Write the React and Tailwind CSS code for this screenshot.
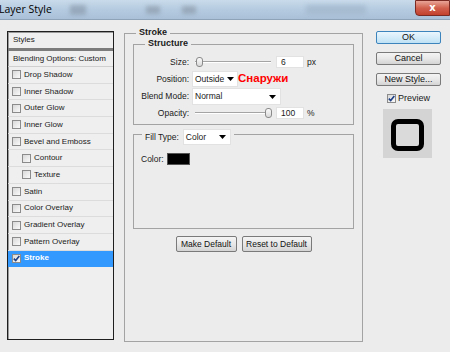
import React from 'react';

const styleRows = [
  { label: 'Drop Shadow' },
  { label: 'Inner Shadow' },
  { label: 'Outer Glow' },
  { label: 'Inner Glow' },
  { label: 'Bevel and Emboss' },
  { label: 'Contour', indent: true },
  { label: 'Texture', indent: true },
  { label: 'Satin' },
  { label: 'Color Overlay' },
  { label: 'Gradient Overlay' },
  { label: 'Pattern Overlay' },
  { label: 'Stroke', checked: true, active: true },
];

const Check = ({ checked = false }) => (
  <span className="w-[9px] h-[9px] shrink-0 border border-[#8b8b8b] bg-linear-to-br from-[#d8d8d8] to-[#fafafa] flex items-center justify-center">
    {checked && (
      <svg width="7" height="7" viewBox="0 0 7 7">
        <path d="M0.8 3.6 L2.7 5.6 L6.3 1" fill="none" stroke="#1d3f86" strokeWidth="1.6" />
      </svg>
    )}
  </span>
);

const Arrow = () => (
  <svg width="7" height="4" viewBox="0 0 7 4" className="shrink-0">
    <path d="M0 0 H7 L3.5 4 Z" fill="#000" />
  </svg>
);

const Button = ({ children, className = '', primary = false }) => (
  <div
    className={`flex items-center justify-center rounded-[2px] border text-[8.5px] text-[#111] ${
      primary
        ? 'border-[#3d84bd] bg-linear-to-b from-[#eaf6fd] to-[#bfe2f5]'
        : 'border-[#7a7a7a] bg-linear-to-b from-[#f4f4f4] via-[#e8e8e8] to-[#d4d4d4]'
    } ${className}`}
  >
    {children}
  </div>
);

const Slider = ({ pos }) => (
  <div className="relative w-[76px] h-[12px] flex items-center">
    <div className="w-full h-[2px] border-t border-[#a4a4a4] bg-white" />
    <div
      className="absolute top-[1px] w-[7px] h-[10px] rounded-[3px] border border-[#8a8a8a] bg-linear-to-b from-[#fbfbfb] to-[#d9d9d9]"
      style={{ left: pos }}
    />
  </div>
);

export default function App() {
  return (
    <div className="w-[450px] h-[352px] overflow-hidden bg-[#ececec] font-['Liberation_Sans',Arial,sans-serif] text-[8.5px] text-[#1a1a1a] leading-none">
      {/* Title bar */}
      <div className="relative h-[20px] flex items-center bg-linear-to-b from-[#c9dbeb] via-[#b5cbe0] to-[#a9c0d8] border-b border-[#8fa3b8]">
        <span className="text-[10.5px] text-black font-['Open_Sans',Arial,sans-serif] -ml-[1px]">Layer Style</span>
        <div className="ml-[18px] w-[16px] h-[10px] bg-[#8b9cae] blur-[2px] opacity-70" />
        <div className="ml-[60px] w-[14px] h-[8px] bg-[#8c9bab] blur-[2px] opacity-70" />
        <div className="ml-[22px] w-[14px] h-[8px] bg-[#8c9bab] blur-[2px] opacity-70" />
        <div className="ml-[110px] w-[60px] h-[10px] bg-[#a4b9ce] blur-[2px] opacity-80" />
        <div className="absolute right-0 top-0 w-[35px] h-[16px] rounded-bl-[4px] border border-[#7a2a22] bg-linear-to-b from-[#e8a597] via-[#d1604e] to-[#c2402c] flex items-center justify-center">
          <span className="text-white font-bold text-[10px] font-['DejaVu_Sans',sans-serif]">x</span>
        </div>
      </div>

      <div className="flex pl-[7px] pt-[11px]">
        {/* Styles list */}
        <div className="w-[107px] h-[309px] border border-[#1f1f1f] bg-[#efefef] shadow-[inset_1px_1px_0_#9a9a9a] flex flex-col text-[8px]">
          <div className="h-[16px] flex items-center pl-[5px]">Styles</div>
          <div className="h-[3px] bg-[#7c7c7c]" />
          <div className="h-[16px] flex items-center pl-[5px] border-b border-[#cfcfcf]">Blending Options: Custom</div>
          {styleRows.map((row) => (
            <div
              key={row.label}
              className={`h-[16.7px] flex items-center gap-[3px] border-b ${
                row.active ? 'bg-[#3399ff] text-white font-bold border-[#3399ff]' : 'border-[#dcdcdc]'
              } ${row.indent ? 'pl-[14px]' : 'pl-[4px]'}`}
            >
              <Check checked={row.checked} />
              <span>{row.label}</span>
            </div>
          ))}
        </div>

        {/* Stroke panel */}
        <div className="relative ml-[10px] mt-[2px] w-[239px] h-[309px] border border-[#a3a3a3] flex flex-col px-[8px] pt-[10px]">
          <span className="absolute -top-[6px] left-[11px] px-[3px] bg-[#ececec] font-bold text-[9px]">Stroke</span>

          <div className="relative h-[81px] border border-[#a3a3a3] flex flex-col">
            <span className="absolute -top-[6px] left-[11px] px-[3px] bg-[#ececec] font-bold text-[9px]">Structure</span>

            <div className="mt-[11px] h-[12px] flex items-center">
              <span className="w-[55px] text-right">Size:</span>
              <span className="ml-[6px]"><Slider pos={1} /></span>
              <div className="ml-[5px] w-[28px] h-[12px] bg-white border border-[#e2e2e2] flex items-center pl-[4px]">6</div>
              <span className="ml-[3px]">px</span>
            </div>

            <div className="mt-[3px] h-[16px] flex items-center">
              <span className="w-[55px] text-right">Position:</span>
              <div className="ml-[3px] w-[46px] h-[16px] bg-white border border-[#e2e2e2] flex items-center justify-between pl-[2px] pr-[3px]">
                <span>Outside</span>
                <Arrow />
              </div>
              <span className="text-[11.5px] font-bold text-[#ff0000]">Снаружи</span>
            </div>

            <div className="mt-[1px] h-[17px] flex items-center">
              <span className="w-[55px] text-right">Blend Mode:</span>
              <div className="ml-[3px] w-[89px] h-[17px] bg-white border border-[#e2e2e2] flex items-center justify-between pl-[2px] pr-[4px]">
                <span>Normal</span>
                <Arrow />
              </div>
            </div>

            <div className="mt-[2px] h-[12px] flex items-center">
              <span className="w-[55px] text-right">Opacity:</span>
              <span className="ml-[6px]"><Slider pos={70} /></span>
              <div className="ml-[5px] w-[28px] h-[12px] bg-white border border-[#e2e2e2] flex items-center pl-[4px]">100</div>
              <span className="ml-[3px]">%</span>
            </div>
          </div>

          <div className="relative mt-[9px] h-[95px] border border-[#a3a3a3] flex flex-col pl-[7px] pt-[18px]">
            <div className="absolute -top-[6px] left-[8px] px-[3px] bg-[#ececec] flex items-center">
              <span>Fill Type:</span>
              <div className="ml-[4px] w-[48px] h-[16px] bg-white border border-[#e2e2e2] flex items-center justify-between pl-[2px] pr-[4px]">
                <span>Color</span>
                <Arrow />
              </div>
            </div>
            <div className="h-[12px] flex items-center">
              <span>Color:</span>
              <div className="ml-[3px] w-[23px] h-[12px] bg-black border border-[#555]" />
            </div>
          </div>

          <div className="mt-[7px] flex justify-center gap-[5px]">
            <Button className="w-[61px] h-[16px]">Make Default</Button>
            <Button className="w-[70px] h-[16px]">Reset to Default</Button>
          </div>
        </div>

        {/* Right column */}
        <div className="ml-[13px] w-[65px] flex flex-col">
          <Button primary className="h-[13px] text-[9px]">OK</Button>
          <Button className="mt-[8px] h-[13px] text-[9px]">Cancel</Button>
          <Button className="mt-[8px] h-[13px] text-[9px]">New Style...</Button>
          <div className="mt-[7px] h-[11px] flex items-center pl-[11px] gap-[2px] text-[9px]">
            <Check checked />
            <span>Preview</span>
          </div>
          <div className="mt-[5px] ml-[7px] w-[49px] h-[49px] bg-[#d4d4d4] flex items-center justify-center">
            <div className="mt-[2px] w-[33px] h-[32px] rounded-[7px] border-[5px] border-black bg-[#dadada]" />
          </div>
        </div>
      </div>
    </div>
  );
}
